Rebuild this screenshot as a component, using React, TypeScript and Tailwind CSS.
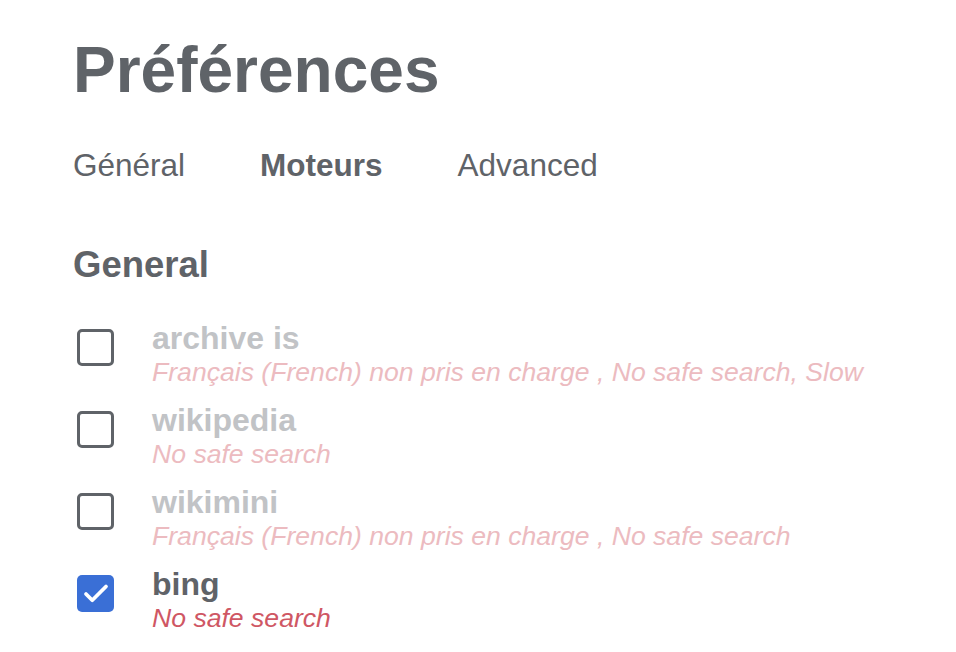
import { Check } from 'lucide-react'

type Engine = {
  name: string
  note: string
  checked: boolean
}

const engines: Engine[] = [
  {
    name: 'archive is',
    note: 'Français (French) non pris en charge , No safe search, Slow',
    checked: false,
  },
  { name: 'wikipedia', note: 'No safe search', checked: false },
  {
    name: 'wikimini',
    note: 'Français (French) non pris en charge , No safe search',
    checked: false,
  },
  { name: 'bing', note: 'No safe search', checked: true },
]

function Box({ checked }: { checked: boolean }) {
  if (checked) {
    return (
      <span className="mt-[8px] flex h-[37px] w-[37px] shrink-0 items-center justify-center rounded-[5px] bg-[#3a6fd6]">
        <Check size={30} strokeWidth={3} className="text-white" />
      </span>
    )
  }
  return (
    <span className="mt-[8px] block h-[37px] w-[37px] shrink-0 rounded-[5px] border-[3.5px] border-[#5f6368] bg-white" />
  )
}

function EngineRow({ engine }: { engine: Engine }) {
  return (
    <div className="flex items-start gap-[38px] pl-[4px]">
      <Box checked={engine.checked} />
      <div className="flex flex-col">
        <span
          className={`text-[32px] font-bold leading-[34px] ${
            engine.checked ? 'text-[#5f6368]' : 'text-[#c1c3c6]'
          }`}
        >
          {engine.name}
        </span>
        <span
          className={`text-[26.6px] italic leading-[34px] ${
            engine.checked ? 'text-[#cf5764]' : 'text-[#ecbbc0]'
          }`}
        >
          {engine.note}
        </span>
      </div>
    </div>
  )
}

export default function App() {
  return (
    <div className="min-h-[652px] bg-white px-[73px] pt-[35px] font-['Liberation_Sans',Arial,sans-serif] text-[#5f6368]">
      <h1 className="text-[64px] font-bold leading-[70px]">Préférences</h1>

      <div className="mt-[40px] flex gap-[75px] text-[31.5px] leading-[40px]">
        <span>Général</span>
        <span className="font-bold">Moteurs</span>
        <span>Advanced</span>
      </div>

      <h2 className="mt-[58px] text-[36.5px] font-bold leading-[44px]">General</h2>

      <div className="mt-[34px] flex flex-col gap-[14px]">
        {engines.map((e) => (
          <EngineRow key={e.name} engine={e} />
        ))}
      </div>
    </div>
  )
}
